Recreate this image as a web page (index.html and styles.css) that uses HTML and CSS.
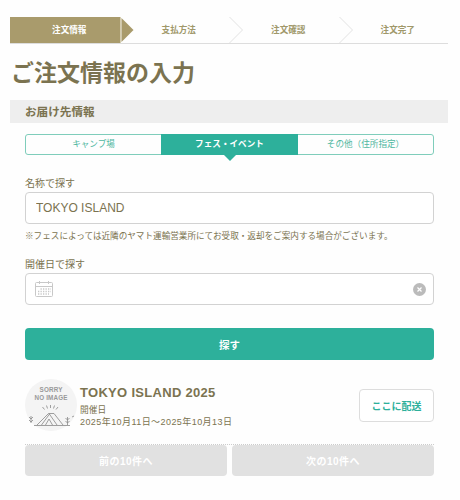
FILE: index.html
```html
<!DOCTYPE html>
<html lang="ja">
<head>
  <meta charset="utf-8">
  <meta name="viewport" content="width=device-width, initial-scale=1">
  <title>ご注文情報の入力</title>
  <link rel="stylesheet" href="styles.css">
</head>
<body>
<main>
  <ol class="steps">
    <li class="current">
      注文情報
      <svg class="arrow" viewBox="0 0 14 26"><path d="M0.5 0L13.5 13L0.5 26"/></svg>
    </li>
    <li>
      支払方法
      <svg class="arrow" viewBox="0 0 14 26"><path d="M0.5 0L13.5 13L0.5 26"/></svg>
    </li>
    <li>
      注文確認
      <svg class="arrow" viewBox="0 0 14 26"><path d="M0.5 0L13.5 13L0.5 26"/></svg>
    </li>
    <li>注文完了</li>
  </ol>

  <h1>ご注文情報の入力</h1>
  <h2>お届け先情報</h2>

  <div class="content">
    <div class="tabs">
      <button type="button">キャンプ場</button>
      <button type="button" class="active">フェス・イベント</button>
      <button type="button">その他（住所指定）</button>
    </div>

    <form>
      <label for="name">名称で探す</label>
      <input class="field" id="name" type="text" value="TOKYO ISLAND">
      <p class="note">※フェスによっては近隣のヤマト運輸営業所にてお受取・返却をご案内する場合がございます。</p>

      <label for="date">開催日で探す</label>
      <div class="field date">
        <svg class="calendar" viewBox="0 0 18 16">
          <rect x="0.5" y="1.5" width="17" height="14" rx="1"/>
          <path d="M0.5 5.5H17.5M4.5 0V3M13.5 0V3"/>
          <path class="days" d="M5.5 8H16M3 10.5H16M3 13H14"/>
        </svg>
        <input id="date" type="text">
        <button type="button" class="clear" aria-label="クリア">
          <svg viewBox="0 0 13 13"><circle cx="6.5" cy="6.5" r="6.5"/><path d="M4.5 4.5L8.5 8.5M8.5 4.5L4.5 8.5"/></svg>
        </button>
      </div>

      <button type="button" class="search">探す</button>
    </form>

    <div class="result">
      <svg class="thumb" viewBox="0 0 52 52">
        <circle cx="26" cy="26" r="26"/>
        <text x="26" y="13" textLength="23">SORRY</text>
        <text x="26" y="21" textLength="33">NO IMAGE</text>
        <path d="M9 46.5H45M12 46L23.5 34.5H29L38 46M24.5 35L16.5 46M24 34.5L32 46M20.5 46L24 40L27.5 46"/>
        <path d="M17.5 28L19.5 30.5M21.5 26.5L22.5 29.5M25.5 26V29M29.5 26.5L28.5 29.5M33 28L31 30.5"/>
        <path d="M6 37V44M4 38L6 40L8 38M4 41L6 43L8 41M42.5 38V46M40.5 39L42.5 41L44.5 39M40.5 42L42.5 44L44.5 42M47 38L49 37"/>
      </svg>
      <div class="info">
        <h3>TOKYO ISLAND 2025</h3>
        <p>開催日</p>
        <p class="period">2025年10月11日〜2025年10月13日</p>
      </div>
      <button type="button" class="deliver">ここに配送</button>
    </div>

    <div class="pager">
      <button type="button">前の10件へ</button>
      <button type="button">次の10件へ</button>
    </div>
  </div>
</main>
</body>
</html>
```

FILE: styles.css
```css
* {
  box-sizing: border-box;
}

body {
  margin: 0;
  background: #fefefe;
  color: #7b7350;
  font-family: "Liberation Sans", "Noto Sans CJK JP", sans-serif;
}

main {
  padding: 17px 12px 0 10px;
}

h1, h2, h3, p, ol {
  margin: 0;
  padding: 0;
}

button, input {
  padding: 0;
  border: 0;
  background: none;
  color: inherit;
  font-family: inherit;
}

.steps {
  display: grid;
  grid-template-columns: repeat(4, 1fr);
  height: 27px;
  border-bottom: 1px solid #ddd;
  list-style: none;
  font-size: 8.6px;
  font-weight: bold;
  line-height: 26px;
  text-align: center;
  color: #a0986a;
}

.steps li {
  position: relative;
  padding-left: 9px;
}

.steps .current {
  height: 26px;
  background: #a99b6c;
  color: #fff;
}

.arrow {
  position: absolute;
  z-index: 1;
  top: 0;
  left: 100%;
  width: 14px;
  height: 26px;
  fill: #fefefe;
  stroke: #e2e2e2;
}

.current .arrow {
  border-left: 1px solid #d5cdb0;
  fill: #a99b6c;
  stroke: none;
}

h1 {
  margin-top: 12px;
  font-size: 23px;
  line-height: 34px;
  padding-left: 1px;
}

h2 {
  height: 23px;
  margin-top: 10px;
  padding-left: 15px;
  background: #eee;
  font-size: 11.6px;
  line-height: 23px;
}

.content {
  padding: 11px 14px 0 15px;
}

.tabs {
  display: grid;
  grid-template-columns: 1fr 137px 1fr;
  height: 21px;
  border: 1px solid #7fcdbb;
  border-radius: 3px;
  font-size: 8.6px;
}

.tabs button {
  position: relative;
  color: #4fb79f;
  font-size: 8.6px;
  line-height: 19px;
}

.tabs .active {
  margin: -1px 0;
  background: #2db09b;
  color: #fff;
  font-weight: bold;
}

.tabs .active::after {
  content: "";
  position: absolute;
  top: 100%;
  left: calc(50% - 6px);
  border: 6px solid transparent;
  border-top-color: #2db09b;
  border-bottom: 0;
}

label {
  display: block;
  margin-top: 21px;
  font-size: 10px;
  line-height: 16px;
}

.field {
  display: block;
  width: 100%;
  height: 32px;
  border: 1px solid #d2d2d2;
  border-radius: 4px;
  background: #fff;
}

input.field {
  padding: 0 10px;
  font-size: 12px;
}

.note {
  margin-top: 5px;
  font-size: 8.6px;
  line-height: 14px;
  white-space: nowrap;
}

.note + label {
  margin-top: 14px;
}

.date {
  display: flex;
  align-items: center;
  padding: 0 7px 0 9px;
}

.date input {
  flex: 1;
}

.calendar {
  width: 18px;
  height: 16px;
  fill: none;
  stroke: #c8c8c8;
}

.calendar .days {
  stroke-width: 1.5;
  stroke-dasharray: 1.3 1.2;
}

.clear, .clear svg {
  display: block;
  width: 13px;
  height: 13px;
}

.clear svg {
  fill: #bbb;
}

.clear path {
  stroke: #fff;
  stroke-width: 1.2;
}

.search {
  display: block;
  width: 100%;
  height: 32px;
  margin-top: 23px;
  border-radius: 4px;
  background: #2db09b;
  color: #fff;
  font-size: 10.4px;
  font-weight: bold;
}

.result {
  display: flex;
  align-items: center;
  height: 85px;
  padding-bottom: 8px;
  border-bottom: 1px dotted #ccc;
}

.thumb {
  width: 52px;
  height: 52px;
  margin-top: 14px;
  fill: none;
  stroke: #888;
  stroke-width: 0.8;
}

.thumb circle {
  fill: #f4f4f4;
  stroke: none;
}

.thumb text {
  fill: #999;
  stroke: none;
  font: bold 6.3px "Liberation Sans", sans-serif;
  text-anchor: middle;
}

.info {
  flex: 1;
  margin-top: 14px;
  padding-left: 3px;
}

.info h3 {
  font-size: 13px;
  letter-spacing: 0.3px;
  line-height: 20px;
}

.info p {
  padding-top: 1px;
  font-size: 8.7px;
  line-height: 12px;
}

.info .period {
  padding: 0;
  font-size: 9px;
  letter-spacing: 0.43px;
}

.deliver {
  width: 75px;
  height: 33px;
  margin-top: 14px;
  border: 1px solid #ddd;
  border-radius: 4px;
  background: #fff;
  color: #2db09b;
  font-size: 10px;
  font-weight: bold;
}

.pager {
  display: grid;
  grid-template-columns: 1fr 1fr;
  gap: 5px;
}

.pager button {
  height: 31px;
  border-radius: 4px;
  background: #e1e1e1;
  color: #fff;
  font-size: 10px;
  font-weight: bold;
  letter-spacing: 0.5px;
}
```
